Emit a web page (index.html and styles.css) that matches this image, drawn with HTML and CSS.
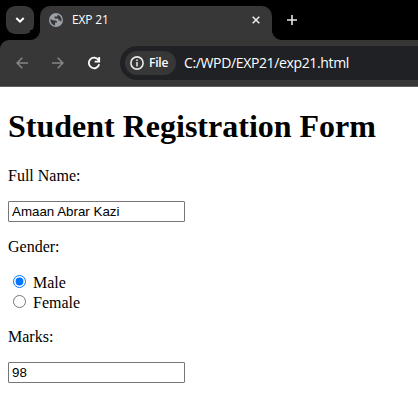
FILE: index.html
```html
<!DOCTYPE html>
<html lang="en">
<head>
<meta charset="utf-8">
<title>EXP 21</title>
<link rel="stylesheet" href="styles.css">
</head>
<body>
<header class="browser">
  <div class="tabstrip">
    <button class="tab-search" aria-label="Search tabs">
      <svg width="10" height="8" viewBox="0 0 10 8"><path d="M1.3 2 5 5.7 8.7 2" fill="none" stroke="#fff" stroke-width="2"/></svg>
    </button>
    <div class="tab">
      <svg class="globe" width="14" height="14" viewBox="0 0 14 14"><circle cx="7" cy="7" r="7" fill="#9aa0a6"/><path d="M1.4 6.1 4.7 7.4H6.7Q8 7.5 8 8.8V9.4H6.1V12.5Q1.4 11.7 1.4 6.1ZM8.7 1.6V2.4Q8.7 3.6 7.4 3.6H5.6V5.6H8.6Q9.6 5.7 9.6 7V7.5H11Q11.9 7.7 12.1 9.1Q13.9 4.1 8.7 1.6Z" fill="#373737"/></svg>
      <span class="tab-title">EXP 21</span>
      <svg class="close" width="8" height="8" viewBox="0 0 8 8"><path d="m.7.7 6.6 6.6m0-6.6L.7 7.3" stroke="#e8e8e8" stroke-width="1.6"/></svg>
    </div>
    <svg class="new-tab" width="10" height="10" viewBox="0 0 10 10"><path d="M5 0v10M0 5h10" stroke="#e8e8e8" stroke-width="1.6"/></svg>
  </div>
  <div class="toolbar">
    <svg class="back" width="12" height="12" viewBox="0 0 12 12"><path d="M12 6H1.2M6.3.8 1.1 6l5.2 5.2" fill="none" stroke="#868686" stroke-width="1.5"/></svg>
    <svg class="forward" width="12" height="12" viewBox="0 0 12 12"><path d="M0 6h10.8M5.7.8 10.9 6l-5.2 5.2" fill="none" stroke="#868686" stroke-width="1.5"/></svg>
    <svg class="reload" width="14" height="14" viewBox="0 0 14 14"><path d="M12.2 8.3A5.3 5.3 0 1 1 11.6 4.2M12.2 1v4.6H7.7" fill="none" stroke="#fff" stroke-width="1.8"/></svg>
    <div class="address">
      <span class="chip"><svg width="14" height="14" viewBox="0 0 14 14"><circle cx="7" cy="7" r="6.1" fill="none" stroke="#e8e8e8" stroke-width="1.6"/><path d="M7 6v4.4M7 3.5V5" stroke="#e8e8e8" stroke-width="1.5"/></svg><span class="chip-label">File</span></span>
      <span class="url">C:/WPD/EXP21/exp21.html</span>
    </div>
  </div>
</header>
<main>
  <h1>Student Registration Form</h1>
  <form>
    <p>Full Name:</p>
    <input class="field" type="text" value="Amaan Abrar Kazi" aria-label="Full Name">
    <p>Gender:</p>
    <div class="options">
      <label><input type="radio" name="gender" checked><span>Male</span></label>
      <label><input type="radio" name="gender"><span>Female</span></label>
    </div>
    <p>Marks:</p>
    <input class="field" type="text" value="98" aria-label="Marks">
  </form>
</main>
</body>
</html>
```
FILE: styles.css
```css
* { box-sizing: border-box; }
body { margin: 0; background: #fff; color: #000; font: 16px/18px "Liberation Serif", serif; overflow: hidden; }
svg { display: block; flex: none; }
.browser { background: #000; font-family: "Open Sans", "Noto Sans", sans-serif; color: #fff; }
.tabstrip { height: 40px; display: flex; align-items: flex-start; padding: 6px 0 0 6px; }
.tab-search { width: 28px; height: 28px; border: 0; padding: 0; border-radius: 9px; background: #373737; display: flex; align-items: center; justify-content: center; }
.tab { position: relative; width: 232px; height: 34px; margin-left: 6px; border-radius: 10px 10px 0 0; background: #373737; display: flex; align-items: center; padding: 0 12px 6px 9px; }
.tab::before, .tab::after { content: ""; position: absolute; bottom: 0; width: 10px; height: 10px; }
.tab::before { left: -10px; background: radial-gradient(circle at 0 0, #000 9.5px, #373737 10.5px); }
.tab::after { right: -10px; background: radial-gradient(circle at 100% 0, #000 9.5px, #373737 10.5px); }
.tab-title { margin-left: 9px; font-size: 12px; line-height: 16px; letter-spacing: -.15px; }
.close { margin-left: auto; }
.new-tab { margin: 9px 0 0 15px; }
.toolbar { height: 47px; background: #373737; border-bottom: 1px solid #616161; border-radius: 9px 0 0 0; display: flex; align-items: center; padding-left: 16px; }
.forward { margin-left: 24px; }
.reload { margin-left: 23px; }
.address { flex: 1; margin-left: 19px; height: 34px; border-radius: 17px 0 0 17px; background: #202124; display: flex; align-items: center; padding-left: 5px; }
.chip { width: 51px; height: 24px; border-radius: 12px; background: #373737; display: flex; align-items: center; padding-left: 5px; }
.chip-label { margin-left: 5px; font-size: 12px; font-weight: 600; line-height: 16px; letter-spacing: -.2px; }
.url { margin-left: 8px; font-size: 14px; line-height: 20px; white-space: nowrap; letter-spacing: -.36px; }
main { padding: 21px 8px 0; }
h1 { margin: 0 0 22px; font-size: 32px; line-height: 37px; font-weight: bold; white-space: nowrap; }
p { margin: 16px 0; }
form > p:first-child { margin-top: 0; }
.field { display: block; width: 177px; height: 21px; margin: 0; padding: 1px 2px 1px 3px; border: 1px solid #767676; border-radius: 1px; background: #fff; color: #000; font: 13.333px "Liberation Sans", sans-serif; }
.options label { display: flex; height: 20px; align-items: flex-start; }
.options input { width: 13px; height: 13px; margin: 3px 7px 0 5px; }
.options span { line-height: 22px; }
```
